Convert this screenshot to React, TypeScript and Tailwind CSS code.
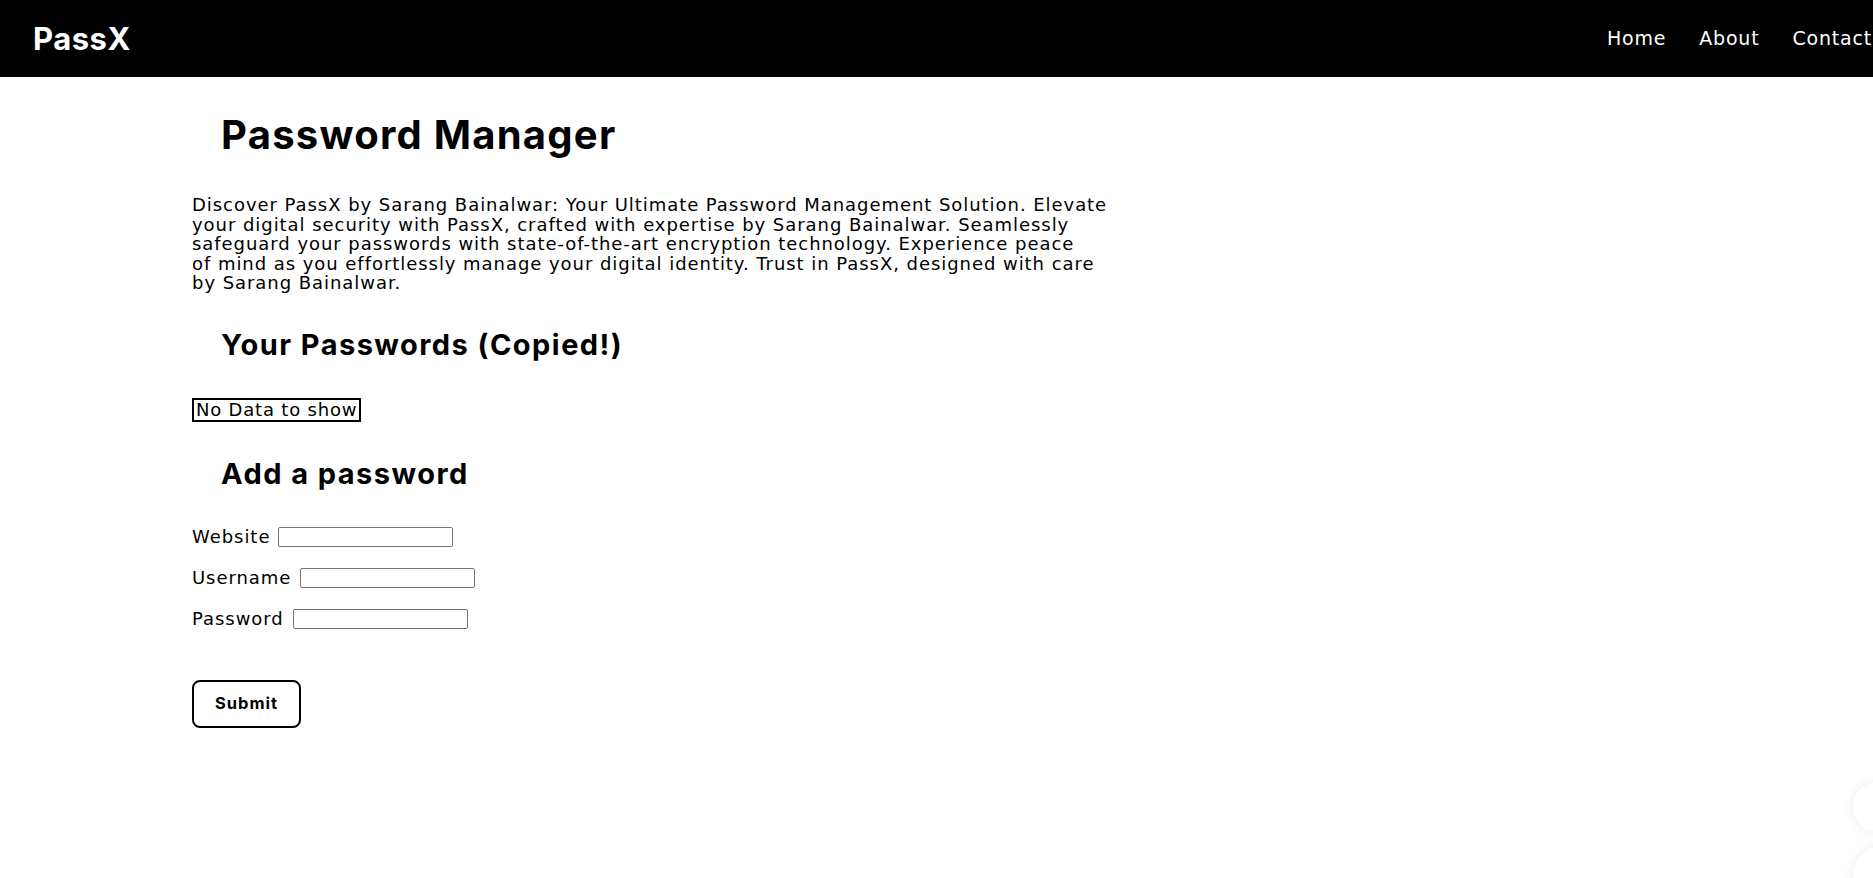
import React from "react";

const head = { fontFamily: "Inter, 'Noto Sans', sans-serif" };
const body = { fontFamily: "'DejaVu Sans', 'Noto Sans', sans-serif" };

const fields = [
    { label: "Website", width: "w-[81px]" },
    { label: "Username", width: "w-[103px]" },
    { label: "Password", width: "w-[96px]" },
];

function Navbar() {
    return (
        <nav className="flex h-[77px] items-center bg-black pl-[33px] pr-[1px] text-white">
            <span className="text-[31px] font-bold leading-none tracking-[0.5px]" style={head}>
                PassX
            </span>
            <ul className="ml-auto flex gap-[33px] text-[19px] leading-none tracking-[0.8px]" style={body}>
                <li>Home</li>
                <li>About</li>
                <li>Contact</li>
            </ul>
        </nav>
    );
}

export default function App() {
    return (
        <div className="relative min-h-[878px] overflow-hidden bg-white text-black" style={head}>
            <Navbar />
            <main className="ml-[192px] w-[960px] pt-[34px]">
                <h1 className="pl-[29px] text-[40px] font-bold leading-[48px] tracking-[1.25px]">
                    Password Manager
                </h1>
                <p className="mt-[36px] text-[18px] leading-[19.5px] tracking-[0.95px]" style={body}>
                    Discover PassX by Sarang Bainalwar: Your Ultimate Password Management Solution. Elevate
                    <br />
                    your digital security with PassX, crafted with expertise by Sarang Bainalwar. Seamlessly
                    <br />
                    safeguard your passwords with state-of-the-art encryption technology. Experience peace
                    <br />
                    of mind as you effortlessly manage your digital identity. Trust in PassX, designed with care
                    <br />
                    by Sarang Bainalwar.
                </p>
                <h2 className="mt-[35px] pl-[29px] text-[29px] font-bold leading-[34px] tracking-[1.45px]">
                    Your Passwords (Copied!)
                </h2>
                <div
                    className="mt-[36px] inline-block border-2 border-black px-[2px] text-[18px] leading-[20px] tracking-[0.8px]"
                    style={body}
                >
                    No Data to show
                </div>
                <h2 className="mt-[35px] pl-[29px] text-[29px] font-bold leading-[34px] tracking-[1.45px]">
                    Add a password
                </h2>
                <form className="mt-[36px] flex flex-col gap-[21px]">
                    {fields.map((f) => (
                        <div key={f.label} className="flex h-[20px] items-center gap-[5px]">
                            <label
                                className={`${f.width} text-[18px] leading-[20px] tracking-[0.95px]`}
                                style={body}
                            >
                                {f.label}
                            </label>
                            <input
                                type="text"
                                className="h-[20px] w-[175px] rounded-[2px] border border-[#767676]"
                            />
                        </div>
                    ))}
                    <button
                        type="button"
                        className="mt-[30px] h-[48px] w-[109px] rounded-[8px] border-2 border-black text-[16.5px] font-bold tracking-[1px]"
                    >
                        Submit
                    </button>
                </form>
            </main>
            <div className="absolute right-[-30px] top-[782px] h-[50px] w-[50px] rounded-full bg-white shadow-[0_0_12px_rgba(0,0,0,0.08)]" />
            <div className="absolute right-[-40px] top-[846px] h-[60px] w-[60px] rounded-full bg-white shadow-[0_0_12px_rgba(0,0,0,0.08)]" />
        </div>
    );
}
